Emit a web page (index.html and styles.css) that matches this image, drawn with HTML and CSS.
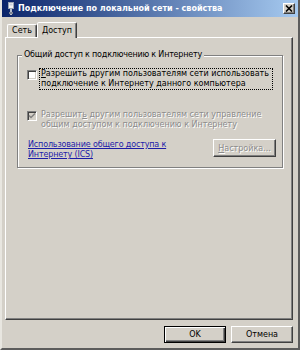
FILE: index.html
```html
<!DOCTYPE html>
<html lang="ru">
<head>
    <meta charset="UTF-8">
    <meta name="viewport" content="width=device-width, initial-scale=1.0">
    <title>Подключение по локальной сети - свойства</title>
    <link rel="stylesheet" href="styles.css">
</head>
<body>
    <div class="window">
        <!-- Title bar -->
        <div class="titlebar">
            <svg class="title-icon" width="8" height="13" viewBox="0 0 8 13">
                <rect x="1.5" y="0.5" width="5" height="6" fill="#f4f4f4" stroke="#9aa4b4"/>
                <rect x="2.5" y="1.5" width="3" height="2" fill="#c8d0dc"/>
                <rect x="3" y="7" width="2" height="6" fill="#b8c0cc"/>
                <rect x="2" y="10" width="4" height="2" fill="#7c8494"/>
            </svg>
            <span class="title-text">Подключение по локальной сети - свойства</span>
            <span class="close-btn">
                <svg width="8" height="7" viewBox="0 0 8 7">
                    <path d="M1 0.5 L7 6.5 M7 0.5 L1 6.5" stroke="#000" stroke-width="1.6"/>
                </svg>
            </span>
        </div>

        <div class="content">
            <!-- Tabs -->
            <div class="tabs">
                <div class="tab">Сеть</div>
                <div class="tab tab-active">Доступ</div>
            </div>

            <!-- Tab page -->
            <div class="panel">
                <fieldset class="group">
                    <legend>Общий доступ к подключению к Интернету</legend>

                    <div class="option">
                        <span class="checkbox"></span>
                        <span class="option-text focused"><u>Р</u>азрешить другим пользователям сети использовать<br>подключение к Интернету данного компьютера</span>
                    </div>

                    <div class="option disabled">
                        <span class="checkbox">
                            <svg width="8" height="8" viewBox="0 0 8 8">
                                <path d="M1 3.5 L3 5.5 L7 1.5" fill="none" stroke="#808080" stroke-width="1.5"/>
                            </svg>
                        </span>
                        <span class="option-text">Разрешит<u>ь</u> другим пользователям сети управление<br>общим доступом к подключению к Интернету</span>
                    </div>

                    <div class="ics-row">
                        <a class="ics-link" href="#">Использование общего доступа к<br>Интернету (ICS)</a>
                        <button class="btn btn-settings" disabled><u>Н</u>астройка...</button>
                    </div>
                </fieldset>
            </div>

            <!-- Dialog buttons -->
            <div class="actions">
                <button class="btn btn-default">OK</button>
                <button class="btn">Отмена</button>
            </div>
        </div>
    </div>
</body>
</html>
```

FILE: styles.css
```css
/* General Styling */
* {
    box-sizing: border-box;
    margin: 0;
    padding: 0;
}

body {
    width: 300px;
    height: 350px;
    background: #d4d0c8;
    font-family: 'DejaVu Sans', sans-serif;
    font-size: 8px;
    line-height: 10px;
    color: #000;
    overflow: hidden;
}

/* Window frame */
.window {
    display: flex;
    flex-direction: column;
    width: 300px;
    height: 350px;
    border-left: 2px solid #e8e6e0;
    border-right: 2px solid #5c5c5c;
    border-bottom: 2px solid #5c5c5c;
}

/* Title bar */
.titlebar {
    display: flex;
    align-items: center;
    height: 17px;
    padding: 0 3px 0 5px;
    background: linear-gradient(to right, #0a246a, #a6caf0);
    color: #fff;
}

.title-icon {
    flex-shrink: 0;
    margin-right: 3px;
}

.title-text {
    flex: 1;
    font-weight: bold;
    font-size: 8px;
    line-height: 17px;
    white-space: nowrap;
}

.close-btn {
    display: flex;
    align-items: center;
    justify-content: center;
    width: 12px;
    height: 11px;
    background: #d4d0c8;
    border: 1px solid;
    border-color: #fff #404040 #404040 #fff;
    box-shadow: inset -1px -1px 0 #808080;
}

/* Content */
.content {
    flex: 1;
    display: flex;
    flex-direction: column;
    padding: 5px 5px 5px 3px;
}

/* Tabs */
.tabs {
    display: flex;
    align-items: flex-end;
    height: 15px;
    padding-left: 2px;
}

.tab {
    height: 13px;
    width: 30px;
    text-align: center;
    line-height: 11px;
    border: 1px solid;
    border-bottom: none;
    border-color: #fff #404040 transparent #fff;
    border-radius: 2px 2px 0 0;
    box-shadow: inset -1px 0 0 #808080;
}

.tab-active {
    position: relative;
    width: 40px;
    height: 16px;
    margin-bottom: -1px;
    padding-top: 2px;
    background: #d4d0c8;
}

/* Tab page */
.panel {
    flex: 1;
    padding: 12px 9px 0 11px;
    border: 1px solid;
    border-color: #fff #404040 #404040 #fff;
    box-shadow: inset -1px -1px 0 #808080;
}

/* Group box */
.group {
    min-width: 0;
    padding: 8px 6px 7px 9px;
    border: 1px solid #808080;
    box-shadow: 1px 1px 0 #fff, inset 1px 1px 0 #fff;
}

.group legend {
    margin-left: -5px;
    padding: 0 2px;
    background: #d4d0c8;
    line-height: 10px;
    letter-spacing: -0.2px;
}

/* Checkbox rows */
.option {
    display: flex;
    align-items: flex-start;
    gap: 2px;
}

.option + .option {
    margin-top: 19px;
}

.checkbox {
    display: flex;
    align-items: center;
    justify-content: center;
    width: 10px;
    height: 10px;
    margin-top: 2px;
    background: #fff;
    border: 1px solid;
    border-color: #808080 #fff #fff #808080;
    box-shadow: inset 1px 1px 0 #404040, inset -1px -1px 0 #d4d0c8;
    flex-shrink: 0;
}

.option-text {
    padding: 0 3px 0 1px;
    border: 1px dotted transparent;
    white-space: nowrap;
}

.option-text.focused {
    border-color: #000;
}

.disabled .checkbox {
    background: #d4d0c8;
}

.disabled .option-text {
    color: #8c8c8c;
    text-shadow: 1px 1px 0 #fff;
}

/* ICS row */
.ics-row {
    display: flex;
    justify-content: space-between;
    align-items: flex-start;
    margin-top: 9px;
    padding-left: 1px;
}

.ics-link {
    color: #1c1ca8;
    text-decoration: underline;
    letter-spacing: -0.15px;
}

/* Buttons */
.btn {
    width: 62px;
    height: 17px;
    font-family: inherit;
    font-size: 8px;
    color: #000;
    background: #d4d0c8;
    border: 1px solid;
    border-color: #fff #404040 #404040 #fff;
    box-shadow: inset -1px -1px 0 #808080;
}

.btn-settings {
    width: 63px;
    height: 18px;
    margin-top: -1px;
}

.btn:disabled {
    color: #8c8c8c;
    text-shadow: 1px 1px 0 #fff;
}

.btn-default {
    border: 1px solid #000;
    box-shadow: inset 1px 1px 0 #fff, inset -1px -1px 0 #404040, inset -2px -2px 0 #808080;
}

.actions {
    display: flex;
    justify-content: flex-end;
    gap: 5px;
    margin-top: 6px;
}
```
